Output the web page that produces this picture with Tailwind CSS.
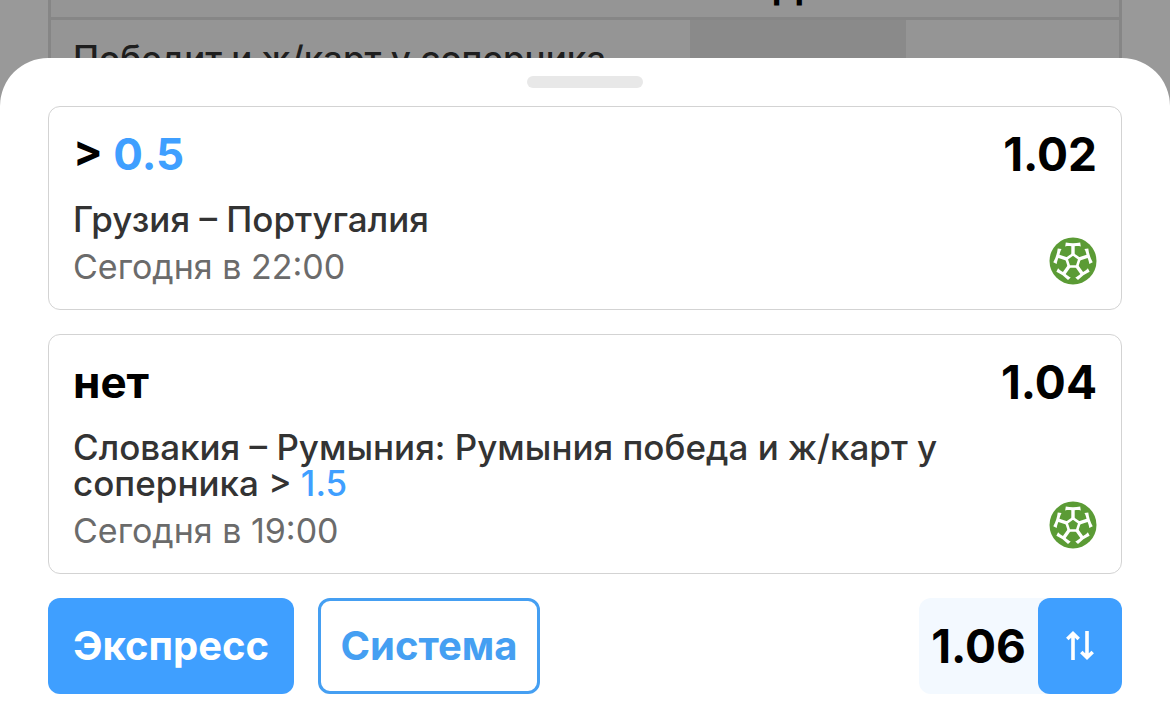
<!DOCTYPE html>
<html lang="ru">
<head>
  <meta charset="UTF-8">
  <meta name="viewport" content="width=device-width, initial-scale=1.0">
  <title>Купон</title>
  <script src="https://cdn.jsdelivr.net/npm/@tailwindcss/browser@4"></script>
</head>
<body class="relative h-screen overflow-hidden bg-white font-['Inter','Noto_Sans',sans-serif] text-black">

  <!-- Линия под купоном -->
  <main class="px-12" aria-hidden="true">
    <div class="border-x-3 border-[#dfdfdf] bg-[#f8f8f8]">
      <div class="flex h-[17px] items-end pb-3">
        <div class="flex-1"></div>
        <div class="w-[216px] text-center text-[35px] leading-9 font-bold">Да</div>
        <div class="w-[213px]"></div>
      </div>
      <div class="flex h-24 border-t-3 border-[#dfdfdf]">
        <div class="flex-1 px-[22px] pt-5 text-[35px] leading-9 font-medium whitespace-nowrap text-[#333]">Победит и ж/карт у соперника</div>
        <div class="w-[216px] bg-[#e6e6e6]"></div>
        <div class="w-[213px]"></div>
      </div>
    </div>
  </main>
  <div class="absolute inset-0 bg-black/40"></div>

  <!-- Купон -->
  <section class="absolute inset-x-0 bottom-0 rounded-t-[48px] bg-white px-12 pt-[18px] pb-[18px]">
    <div class="mx-auto mb-[18px] h-3 w-[116px] rounded-full bg-[#e8e8e8]"></div>

    <div class="flex flex-col gap-6">
      <article class="rounded-xl border border-[#d3d3d3] p-6">
        <div class="flex justify-between text-[44px] leading-[46px] font-bold">
          <h2>&gt; <span class="text-[#3f9fff]">0.5</span></h2>
          <span class="text-[46px]">1.02</span>
        </div>
        <div class="mt-6 flex items-end justify-between">
          <div class="max-w-[880px] leading-9">
            <p class="text-[35px] font-medium text-[#333]">Грузия – Португалия</p>
            <p class="mt-3 text-[34px] text-[#6b6b6b]">Сегодня в 22:00</p>
          </div>
          <svg class="size-12 shrink-0" viewBox="0 0 48 48" aria-hidden="true">
            <defs>
              <path id="seam" d="M22.300 18V9.200C20.500 9.100 18.500 8.900 16.200 9.400L16.800 5.600C21.500 6.600 26.500 6.600 31.200 5.600L31.800 9.400C29.500 8.900 27.500 9.100 25.700 9.200V18Z" fill="#fff"/>
              <g id="ball">
                <circle cx="24" cy="24" r="23.500" fill="#5b9b35"/>
                <path d="M24 17.200L30.500 21.900 28 29.500H20L17.500 21.900Z" fill="#5b9b35" stroke="#fff" stroke-width="2.600" stroke-linejoin="round"/>
                <use href="#seam"/>
                <use href="#seam" transform="rotate(72 24 24)"/>
                <use href="#seam" transform="rotate(144 24 24)"/>
                <use href="#seam" transform="rotate(216 24 24)"/>
                <use href="#seam" transform="rotate(288 24 24)"/>
              </g>
            </defs>
            <use href="#ball"/>
          </svg>
        </div>
      </article>

      <article class="rounded-xl border border-[#d3d3d3] p-6">
        <div class="flex justify-between text-[44px] leading-[46px] font-bold">
          <h2>нет</h2>
          <span class="text-[46px]">1.04</span>
        </div>
        <div class="mt-6 flex items-end justify-between">
          <div class="max-w-[880px] leading-9">
            <p class="text-[35px] font-medium text-[#333]">Словакия – Румыния: Румыния победа и ж/карт у соперника &gt; <span class="text-[#3f9fff]">1.5</span></p>
            <p class="mt-3 text-[34px] text-[#6b6b6b]">Сегодня в 19:00</p>
          </div>
          <svg class="size-12 shrink-0" viewBox="0 0 48 48" aria-hidden="true"><use href="#ball"/></svg>
        </div>
      </article>
    </div>

    <div class="mt-6 flex h-24 justify-between">
      <div class="flex gap-6 text-[40px] font-bold">
        <button type="button" class="w-[246px] rounded-xl bg-[#3f9fff] text-white">Экспресс</button>
        <button type="button" class="w-[222px] rounded-xl border-3 border-[#459ff2] text-[#459ff2]">Система</button>
      </div>
      <div class="flex rounded-xl bg-[#f3f9ff]">
        <output class="flex w-[119px] items-center justify-center text-[46px] font-bold">1.06</output>
        <button type="button" aria-label="Изменение коэффициентов" class="flex w-[84px] items-center justify-center rounded-xl bg-[#3f9fff] text-white">
          <svg class="h-[30px] w-7" viewBox="0 0 28 30" fill="none" stroke="currentColor" stroke-width="3.600" aria-hidden="true">
            <path d="M7 29V2.500M1.300 8L7 2.500 12.700 8M21 0V26.500M15.300 21L21 26.500 26.700 21"/>
          </svg>
        </button>
      </div>
    </div>
  </section>
</body>
</html>
